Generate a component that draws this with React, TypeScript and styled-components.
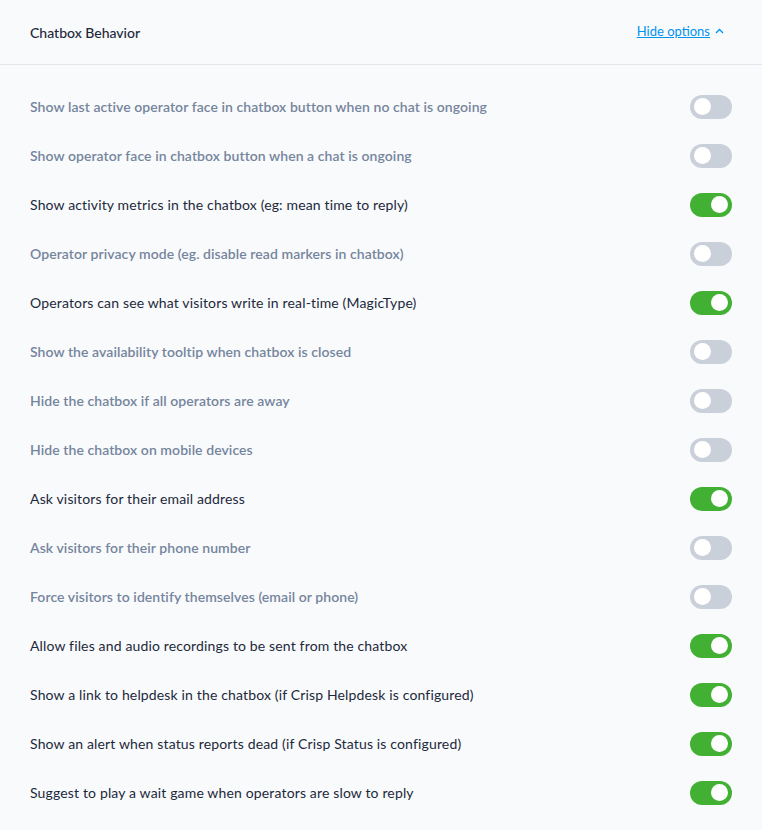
import * as React from "react";
import styled, { createGlobalStyle } from "styled-components";

const GlobalStyle = createGlobalStyle`
  html, body {
    margin: 0;
    padding: 0;
    background: #f9fafc;
  }
  body {
    font-family: Lato, "Open Sans", "Liberation Sans", sans-serif;
    -webkit-font-smoothing: antialiased;
  }
`;

const Panel = styled.div`
  width: 762px;
  min-height: 830px;
  background: #f9fafc;
`;

const Header = styled.div`
  height: 65px;
  display: flex;
  align-items: center;
  justify-content: space-between;
  padding: 0 38px 0 30px;
  border-bottom: 1px solid #e3e6eb;
  box-sizing: border-box;
`;

const Title = styled.div`
  font-size: 14px;
  font-weight: 500;
  color: #1c293b;
`;

const HideLink = styled.a`
  display: flex;
  align-items: center;
  gap: 5px;
  font-size: 13px;
  color: #0093ee;
  text-decoration: underline;
  cursor: pointer;
  margin-top: -3px;
`;

const List = styled.div`
  display: flex;
  flex-direction: column;
  padding-top: 17px;
`;

const Row = styled.div`
  height: 49px;
  display: flex;
  align-items: center;
  justify-content: space-between;
  padding: 0 30px;
`;

const Label = styled.div<{ $active: boolean }>`
  font-size: 14px;
  color: ${(p) => (p.$active ? "#1c293b" : "#75859c")};
  font-weight: ${(p) => (p.$active ? 400 : 600)};
  letter-spacing: ${(p) => (p.$active ? "0.15px" : "0.07px")};
`;

const Track = styled.div<{ $on: boolean }>`
  width: 42px;
  height: 24px;
  border-radius: 12px;
  background: ${(p) => (p.$on ? "#41b033" : "#c9d0da")};
  display: flex;
  align-items: center;
  justify-content: ${(p) => (p.$on ? "flex-end" : "flex-start")};
  padding: 0 4px;
  box-sizing: border-box;
  cursor: pointer;
`;

const Knob = styled.div`
  width: 17px;
  height: 17px;
  border-radius: 50%;
  background: #ffffff;
`;

const options: { label: string; on: boolean }[] = [
  { label: "Show last active operator face in chatbox button when no chat is ongoing", on: false },
  { label: "Show operator face in chatbox button when a chat is ongoing", on: false },
  { label: "Show activity metrics in the chatbox (eg: mean time to reply)", on: true },
  { label: "Operator privacy mode (eg. disable read markers in chatbox)", on: false },
  { label: "Operators can see what visitors write in real-time (MagicType)", on: true },
  { label: "Show the availability tooltip when chatbox is closed", on: false },
  { label: "Hide the chatbox if all operators are away", on: false },
  { label: "Hide the chatbox on mobile devices", on: false },
  { label: "Ask visitors for their email address", on: true },
  { label: "Ask visitors for their phone number", on: false },
  { label: "Force visitors to identify themselves (email or phone)", on: false },
  { label: "Allow files and audio recordings to be sent from the chatbox", on: true },
  { label: "Show a link to helpdesk in the chatbox (if Crisp Helpdesk is configured)", on: true },
  { label: "Show an alert when status reports dead (if Crisp Status is configured)", on: true },
  { label: "Suggest to play a wait game when operators are slow to reply", on: true },
];

const App = () => {
  const [values, setValues] = React.useState(options.map((o) => o.on));

  const toggle = (idx: number) => {
    const next = values.slice();
    next[idx] = !next[idx];
    setValues(next);
  };

  return (
    <Panel>
      <GlobalStyle />
      <Header>
        <Title>Chatbox Behavior</Title>
        <HideLink>
          Hide options
          <svg width="9" height="6" viewBox="0 0 9 6" fill="none">
            <path d="M1 5 L4.5 1.5 L8 5" stroke="#0093ee" strokeWidth="1.3" />
          </svg>
        </HideLink>
      </Header>
      <List>
        {options.map((option, idx) => (
          <Row key={option.label}>
            <Label $active={values[idx]}>{option.label}</Label>
            <Track $on={values[idx]} onClick={() => toggle(idx)}>
              <Knob />
            </Track>
          </Row>
        ))}
      </List>
    </Panel>
  );
};

export default App;
